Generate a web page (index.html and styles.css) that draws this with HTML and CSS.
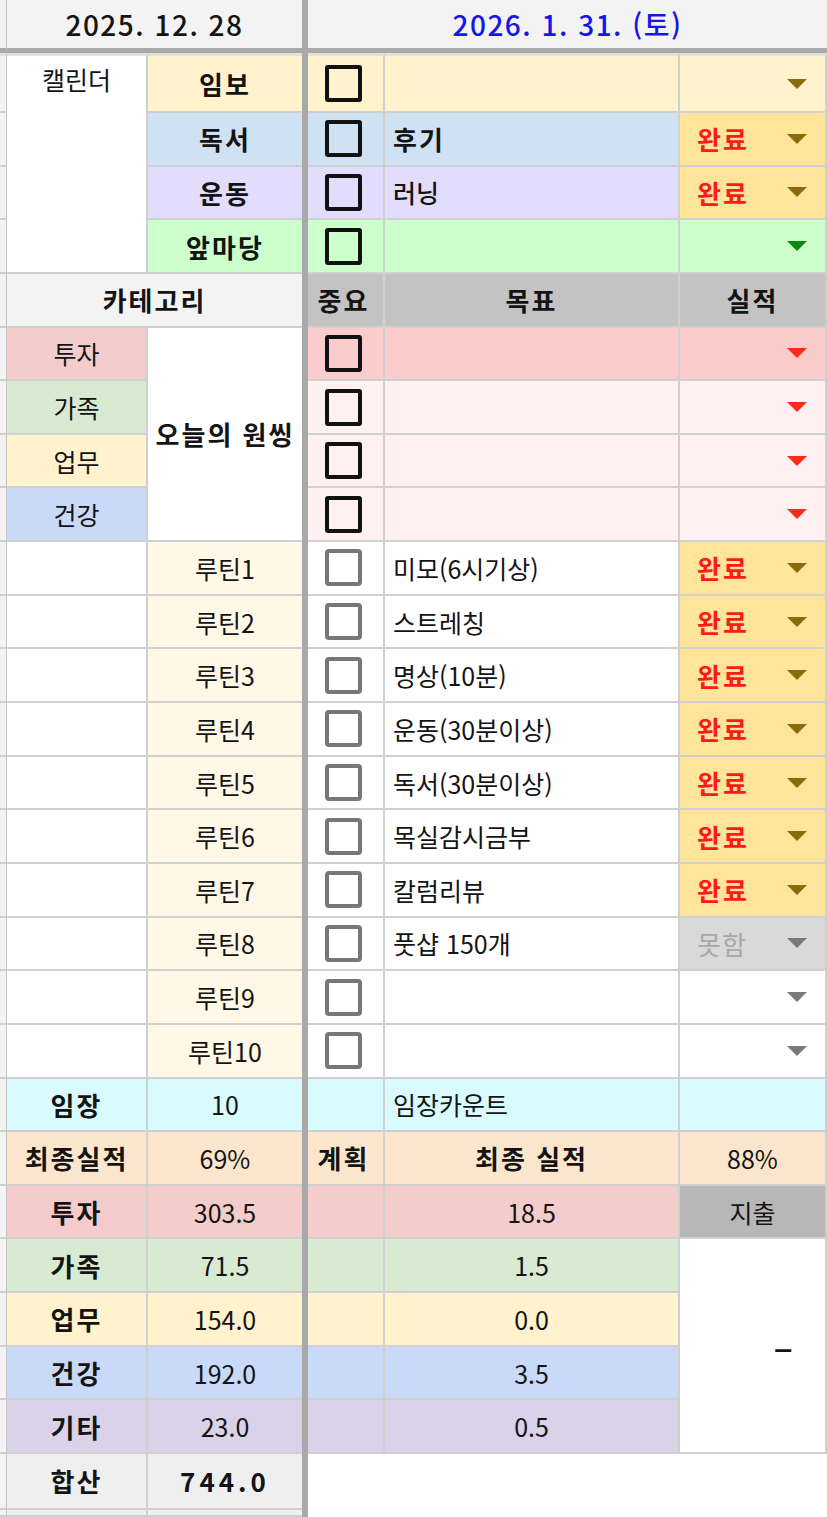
FILE: index.html
```html
<!DOCTYPE html>
<html lang="ko">
<head>
<meta charset="utf-8">
<title>Daily sheet</title>
<link rel="stylesheet" href="styles.css">
</head>
<body>
<div class="sheet">
  <div class="divider"></div>

  <!-- header -->
  <div class="c g top"></div>
  <div class="c ab top date">2025. 12. 28</div>
  <div class="c cde top date blue">2026. 1. 31. (토)</div>

  <!-- 임보 -->
  <div class="c g r1"></div>
  <div class="c a cal r1">캘린더</div>
  <div class="c b y bd r1">임보</div>
  <div class="c cc y r1"><span class="box"></span></div>
  <div class="c d y r1"></div>
  <div class="c e y dd end r1"><span class="arrow gold"></span></div>

  <!-- 독서 -->
  <div class="c g"></div>
  <div class="c b bl bd">독서</div>
  <div class="c cc bl"><span class="box"></span></div>
  <div class="c d bl left bd">후기</div>
  <div class="c e yy dd"><span class="done">완료</span><span class="arrow gold"></span></div>

  <!-- 운동 -->
  <div class="c g"></div>
  <div class="c b lv bd">운동</div>
  <div class="c cc lv"><span class="box"></span></div>
  <div class="c d lv left med">러닝</div>
  <div class="c e yy dd"><span class="done">완료</span><span class="arrow gold"></span></div>

  <!-- 앞마당 -->
  <div class="c g"></div>
  <div class="c b gr bd">앞마당</div>
  <div class="c cc gr"><span class="box"></span></div>
  <div class="c d gr"></div>
  <div class="c e gr dd end"><span class="arrow green"></span></div>

  <!-- 카테고리 -->
  <div class="c g"></div>
  <div class="c ab lgh bd">카테고리</div>
  <div class="c cc gy bd">중요</div>
  <div class="c d gy bd">목표</div>
  <div class="c e gy bd">실적</div>

  <!-- 투자 / 원씽 -->
  <div class="c g"></div>
  <div class="c a rd">투자</div>
  <div class="c b onething bd">오늘의 원씽</div>
  <div class="c cc pk"><span class="box"></span></div>
  <div class="c d pk"></div>
  <div class="c e pk dd end"><span class="arrow red"></span></div>

  <div class="c g"></div>
  <div class="c a gn">가족</div>
  <div class="c cc pk2"><span class="box"></span></div>
  <div class="c d pk2"></div>
  <div class="c e pk2 dd end"><span class="arrow red"></span></div>

  <div class="c g"></div>
  <div class="c a y">업무</div>
  <div class="c cc pk2"><span class="box"></span></div>
  <div class="c d pk2"></div>
  <div class="c e pk2 dd end"><span class="arrow red"></span></div>

  <div class="c g"></div>
  <div class="c a cb">건강</div>
  <div class="c cc pk2"><span class="box"></span></div>
  <div class="c d pk2"></div>
  <div class="c e pk2 dd end"><span class="arrow red"></span></div>

  <!-- 루틴 -->
  <div class="c g"></div>
  <div class="c a"></div>
  <div class="c b cr">루틴1</div>
  <div class="c cc"><span class="box gray"></span></div>
  <div class="c d left">미모(6시기상)</div>
  <div class="c e yy dd"><span class="done">완료</span><span class="arrow gold"></span></div>

  <div class="c g"></div>
  <div class="c a"></div>
  <div class="c b cr">루틴2</div>
  <div class="c cc"><span class="box gray"></span></div>
  <div class="c d left">스트레칭</div>
  <div class="c e yy dd"><span class="done">완료</span><span class="arrow gold"></span></div>

  <div class="c g"></div>
  <div class="c a"></div>
  <div class="c b cr">루틴3</div>
  <div class="c cc"><span class="box gray"></span></div>
  <div class="c d left">명상(10분)</div>
  <div class="c e yy dd"><span class="done">완료</span><span class="arrow gold"></span></div>

  <div class="c g"></div>
  <div class="c a"></div>
  <div class="c b cr">루틴4</div>
  <div class="c cc"><span class="box gray"></span></div>
  <div class="c d left">운동(30분이상)</div>
  <div class="c e yy dd"><span class="done">완료</span><span class="arrow gold"></span></div>

  <div class="c g"></div>
  <div class="c a"></div>
  <div class="c b cr">루틴5</div>
  <div class="c cc"><span class="box gray"></span></div>
  <div class="c d left">독서(30분이상)</div>
  <div class="c e yy dd"><span class="done">완료</span><span class="arrow gold"></span></div>

  <div class="c g"></div>
  <div class="c a"></div>
  <div class="c b cr">루틴6</div>
  <div class="c cc"><span class="box gray"></span></div>
  <div class="c d left">목실감시금부</div>
  <div class="c e yy dd"><span class="done">완료</span><span class="arrow gold"></span></div>

  <div class="c g"></div>
  <div class="c a"></div>
  <div class="c b cr">루틴7</div>
  <div class="c cc"><span class="box gray"></span></div>
  <div class="c d left">칼럼리뷰</div>
  <div class="c e yy dd"><span class="done">완료</span><span class="arrow gold"></span></div>

  <div class="c g"></div>
  <div class="c a"></div>
  <div class="c b cr">루틴8</div>
  <div class="c cc"><span class="box gray"></span></div>
  <div class="c d left">풋샵 150개</div>
  <div class="c e lg dd"><span class="miss">못함</span><span class="arrow grey"></span></div>

  <div class="c g"></div>
  <div class="c a"></div>
  <div class="c b cr">루틴9</div>
  <div class="c cc"><span class="box gray"></span></div>
  <div class="c d left"></div>
  <div class="c e dd end"><span class="arrow grey"></span></div>

  <div class="c g"></div>
  <div class="c a"></div>
  <div class="c b cr">루틴10</div>
  <div class="c cc"><span class="box gray"></span></div>
  <div class="c d left"></div>
  <div class="c e dd end"><span class="arrow grey"></span></div>

  <!-- 임장 -->
  <div class="c g"></div>
  <div class="c a cy bd">임장</div>
  <div class="c b cy">10</div>
  <div class="c cc cy"></div>
  <div class="c d cy left">임장카운트</div>
  <div class="c e cy"></div>

  <!-- 최종실적 -->
  <div class="c g"></div>
  <div class="c a or bd">최종실적</div>
  <div class="c b or">69%</div>
  <div class="c cc or bd">계획</div>
  <div class="c d or bd">최종 실적</div>
  <div class="c e or">88%</div>

  <!-- totals -->
  <div class="c g"></div>
  <div class="c a rd bd">투자</div>
  <div class="c b rd">303.5</div>
  <div class="c cc rd"></div>
  <div class="c d rd">18.5</div>
  <div class="c e sg">지출</div>

  <div class="c g"></div>
  <div class="c a gn bd">가족</div>
  <div class="c b gn">71.5</div>
  <div class="c cc gn"></div>
  <div class="c d gn">1.5</div>
  <div class="c e dash">–</div>

  <div class="c g"></div>
  <div class="c a y bd">업무</div>
  <div class="c b y">154.0</div>
  <div class="c cc y"></div>
  <div class="c d y">0.0</div>

  <div class="c g"></div>
  <div class="c a cb bd">건강</div>
  <div class="c b cb">192.0</div>
  <div class="c cc cb"></div>
  <div class="c d cb">3.5</div>

  <div class="c g"></div>
  <div class="c a pu bd">기타</div>
  <div class="c b pu">23.0</div>
  <div class="c cc pu"></div>
  <div class="c d pu">0.5</div>

  <!-- 합산 -->
  <div class="c g"></div>
  <div class="c a sum bd">합산</div>
  <div class="c b sum bd wide">744.0</div>
  <div class="blank"></div>

  <div class="c g"></div>
  <div class="c a sum"></div>
  <div class="c b sum"></div>
  <div class="blank"></div>
</div>
</body>
</html>
```

FILE: styles.css
```css
html, body {
  margin: 0;
  padding: 0;
  background: #ffffff;
}

.sheet {
  display: grid;
  grid-template-columns: 7px 141px 154px 6px 77px 295px 147px;
  grid-template-rows: 53px 60px repeat(25, 53.65px) 56px 1fr;
  width: 827px;
  height: 1517px;
  overflow: hidden;
  font-family: "Noto Sans CJK KR", "Noto Sans", sans-serif;
  font-size: 25px;
  color: #141414;
  line-height: 1.2;
}

.divider {
  grid-column: 4;
  grid-row: 1 / -1;
  background: #a9a9a9;
}

.c {
  box-sizing: border-box;
  display: flex;
  align-items: center;
  justify-content: center;
  border-right: 2px solid #d0d0d0;
  border-bottom: 2px solid #d0d0d0;
  background: #ffffff;
  min-width: 0;
  white-space: nowrap;
  overflow: hidden;
}

/* columns */
.g { grid-column: 1; background: #f3f3f3; border-right: 1px solid #c4c4c4; border-bottom-color: #cfcfcf; }
.a { grid-column: 2; }
.b { grid-column: 3; border-right: 0; }
.ab { grid-column: 2 / span 2; border-right: 0; }
.cc { grid-column: 5; padding-right: 4px; }
.d { grid-column: 6; }
.e { grid-column: 7; }
.cde { grid-column: 5 / span 3; border-right: 0; }

/* header */
.top {
  background: #f3f3f3;
  border-bottom: 5px solid #a9a9a9;
}
.g.top { border-bottom: 5px solid #a9a9a9; }
.date {
  font-size: 28px;
  font-weight: 500;
  letter-spacing: 1.5px;
  padding-top: 2px;
}
.blue { color: #1616e6; }

.r1 { border-top: 3px solid #dbe3da; }

/* merged cells */
.cal {
  grid-row: span 4;
  align-items: flex-start;
  padding-top: 8px;
  background: #ffffff;
}
.onething {
  grid-row: span 4;
  background: #ffffff;
  letter-spacing: 2px;
}
.dash {
  grid-row: span 4;
  background: #ffffff;
  justify-content: flex-end;
  padding-right: 32px;
  font-size: 36px;
  font-weight: 500;
}
.blank {
  grid-column: 5 / span 3;
  background: #ffffff;
}

/* text */
.bd { font-weight: 700; font-size: 26px; letter-spacing: 2px; }
.med { font-weight: 500; }
.left { justify-content: flex-start; padding-left: 8px; }
.wide { letter-spacing: 4px; }

/* backgrounds */
.y { background: #fff2cc; }
.bl { background: #cfe2f3; }
.lv { background: #e2dcfd; }
.gr { background: #ccffcc; }
.gy { background: #c3c3c3; }
.lgh { background: #f3f3f3; }
.rd { background: #f4cccc; }
.gn { background: #d9ead3; }
.cb { background: #c9daf8; }
.pu { background: #d9d2e9; }
.pk { background: #fbcccc; }
.pk2 { background: #fff0f2; }
.cr { background: #fff8e6; }
.yy { background: #ffe599; }
.lg { background: #d9d9d9; }
.cy { background: #d9fbff; }
.or { background: #fce5cd; }
.sg { background: #b7b7b7; }
.sum { background: #efefef; }

/* dropdown chips */
.dd {
  justify-content: space-between;
  padding: 0 18px 0 17px;
}
.dd.end { justify-content: flex-end; }
.done {
  color: #ff1a1a;
  font-weight: 700;
  font-size: 26px;
  letter-spacing: 2px;
}
.miss {
  color: #a8a8a8;
  font-size: 26px;
  letter-spacing: 1px;
}
.arrow {
  width: 0;
  height: 0;
  border-left: 10px solid transparent;
  border-right: 10px solid transparent;
  border-top: 10px solid #8a6a0c;
}
.arrow.gold { border-top-color: #8a6a0c; }
.arrow.green { border-top-color: #0d8a0d; }
.arrow.red { border-top-color: #ff2a1a; }
.arrow.grey { border-top-color: #7a7a7a; }

/* checkboxes */
.box {
  display: block;
  box-sizing: border-box;
  width: 37px;
  height: 37px;
  border: 4px solid #111111;
  border-radius: 3px;
}
.box.gray { border-color: #777777; border-radius: 4px; }
```
